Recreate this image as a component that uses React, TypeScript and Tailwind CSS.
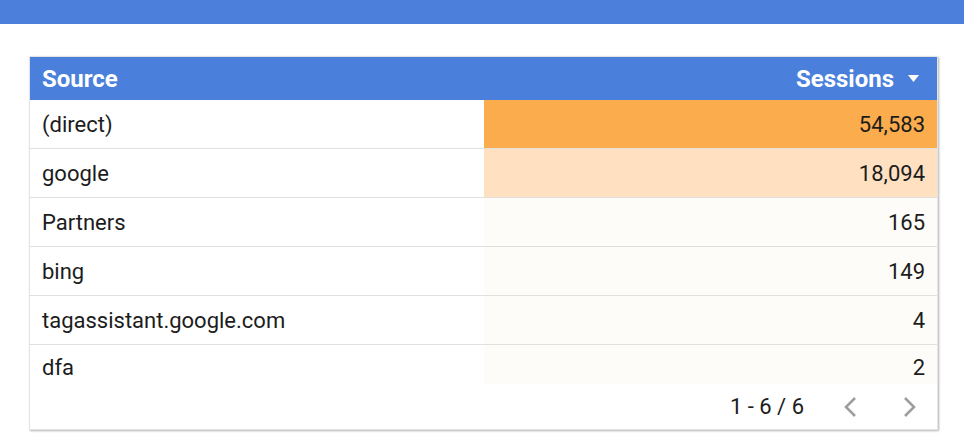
import React from "react";

const rows = [
  { source: "(direct)", sessions: "54,583", bg: "bg-[#fbac4d]" },
  { source: "google", sessions: "18,094", bg: "bg-[#ffe1c2]" },
  { source: "Partners", sessions: "165", bg: "bg-[#fdfcf9]" },
  { source: "bing", sessions: "149", bg: "bg-[#fdfcf9]" },
  { source: "tagassistant.google.com", sessions: "4", bg: "bg-[#fdfcf9]" },
  { source: "dfa", sessions: "2", bg: "bg-[#fdfcf9]" },
];

function Chevron({ dir }: { dir: "left" | "right" }) {
  return (
    <svg width="14" height="22" viewBox="0 0 14 22" fill="none">
      <path
        d={dir === "left" ? "M12 2 L3 11 L12 20" : "M2 2 L11 11 L2 20"}
        stroke="#9e9e9e"
        strokeWidth="2.6"
      />
    </svg>
  );
}

export default function App() {
  return (
    <div className="w-[964px] h-[446px] bg-white font-['Roboto',sans-serif] text-[22px] text-[#1c1c1c]">
      <div className="h-6 bg-[#4b7fdb]" />
      <div className="pt-8 pl-[29px]">
        <div className="w-[909px] bg-white shadow-[1px_1px_2px_rgba(0,0,0,0.3)] border border-[#e4e4e4]">
          <div className="flex h-[43px] items-center bg-[#4a80dc] pl-3 pr-[18px] text-white font-bold text-[24px]">
            <div className="flex-1">Source</div>
            <div className="flex items-center gap-[14px]">
              Sessions
              <svg width="11" height="8" viewBox="0 0 11 8">
                <path d="M0 0 H11 L5.5 7 Z" fill="white" />
              </svg>
            </div>
          </div>
          {rows.map((r, i) =>
            i < rows.length - 1 ? (
              <div key={r.source} className="grid grid-cols-2 h-[49px] border-b border-[#e0e0e0]">
                <div className="flex items-center pl-3">{r.source}</div>
                <div className={`flex items-center justify-end pr-3 ${r.bg}`}>{r.sessions}</div>
              </div>
            ) : (
              <div key={r.source} className="grid grid-cols-2 h-[39px]">
                <div className="pl-3 pt-[10px] leading-[26px]">{r.source}</div>
                <div className={`text-right pr-3 pt-[10px] leading-[26px] ${r.bg}`}>{r.sessions}</div>
              </div>
            )
          )}
          <div className="flex h-[45px] items-center justify-end pr-[20px]">
            <span className="mr-[39px]">1 - 6 / 6</span>
            <Chevron dir="left" />
            <span className="w-[46px]" />
            <Chevron dir="right" />
          </div>
        </div>
      </div>
    </div>
  );
}
